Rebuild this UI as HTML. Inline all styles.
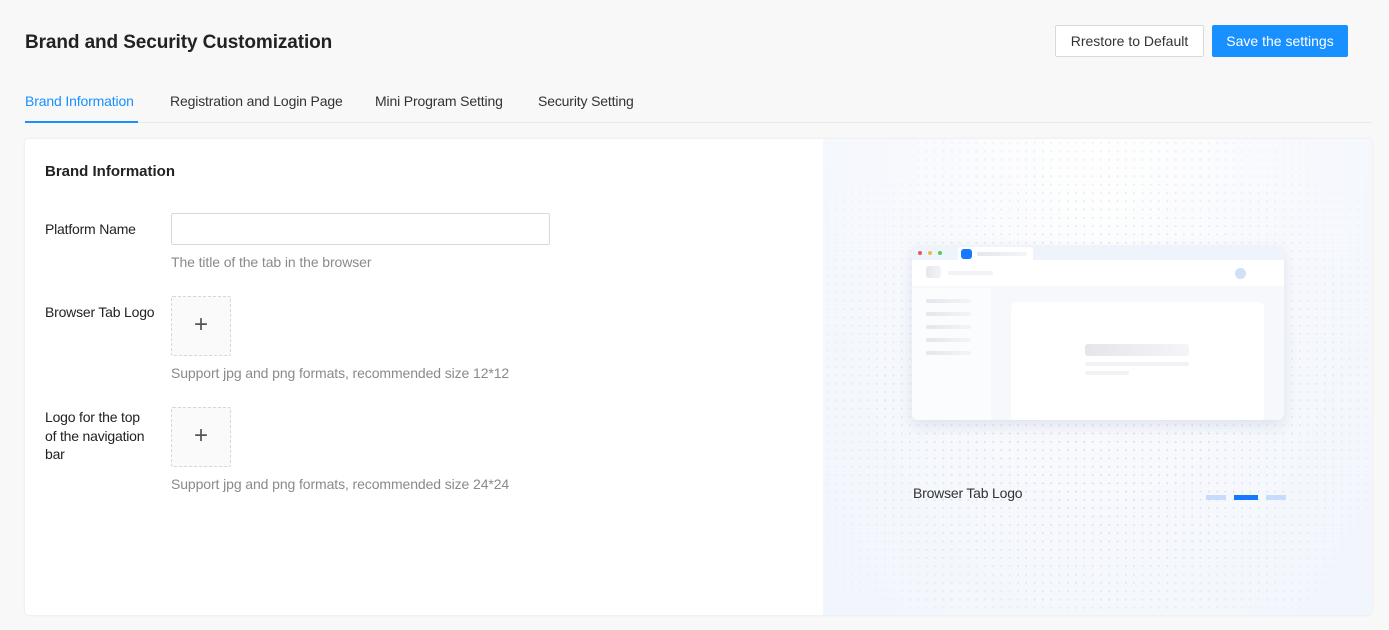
<!DOCTYPE html>
<html><head><meta charset="utf-8"><style>
*{box-sizing:border-box;margin:0;padding:0}
body{width:1389px;height:630px;background:#f8f8f8;font-family:"Liberation Sans",sans-serif;color:#222;position:relative;overflow:hidden}
.abs{position:absolute}
h1{position:absolute;left:25px;top:32px;font-size:19px;font-weight:bold;color:#222;letter-spacing:-0.1px}
.btn{position:absolute;top:25px;height:32px;font-size:14px;line-height:30px;text-align:center;border-radius:2px}
.tab{position:absolute;top:93px;font-size:14px;color:#333;letter-spacing:-0.15px}
.card{position:absolute;left:25px;top:139px;width:1347px;height:476px;background:#fff;border-radius:4px;box-shadow:0 0 3px rgba(0,0,0,.08);overflow:hidden}
.lbl{position:absolute;font-size:14px;color:#222;line-height:18.5px;letter-spacing:-0.2px;white-space:nowrap}
.hint{position:absolute;font-size:14px;color:#8a8a8a;letter-spacing:-0.1px}
.up{position:absolute;width:60px;height:60px;border:1px dashed #d6d6d6;background:#fafafa;border-radius:2px;font-size:24px;color:#555;text-align:center;line-height:56px;font-weight:300}
.right{position:absolute;left:798px;top:0;width:549px;height:476px;background:radial-gradient(ellipse at 50% 0%,#ffffff 0%,#f7f9fd 50%,#f1f5fc 100%);}
.dots{position:absolute;inset:0;background-image:radial-gradient(circle,#d6dbe6 0.8px,transparent 1.1px);background-size:8.3px 8.3px;-webkit-mask-image:radial-gradient(ellipse at 50% 55%,#000 30%,rgba(0,0,0,.35) 75%,transparent 100%)}
.bar{position:absolute;background:linear-gradient(90deg,#e4e6ec,#f4f5f8);border-radius:3px}
</style></head><body>
<h1>Brand and Security Customization</h1>
<div class="btn" style="left:1055px;width:149px;border:1px solid #d9d9d9;background:#fff;color:#333">Rrestore to Default</div>
<div class="btn" style="left:1212px;width:136px;background:#1890ff;color:#fff;line-height:32px">Save the settings</div>
<div class="tab" style="left:25px;color:#1890ff">Brand Information</div>
<div class="tab" style="left:170px">Registration and Login Page</div>
<div class="tab" style="left:375px">Mini Program Setting</div>
<div class="tab" style="left:538px">Security Setting</div>
<div class="abs" style="left:25px;top:122px;width:1347px;height:1px;background:#e9e9e9"></div>
<div class="abs" style="left:25px;top:121px;width:113px;height:2px;background:#1890ff"></div>
<div class="card">
 <div class="abs" style="left:20px;top:24px;font-size:15px;font-weight:bold;color:#222">Brand Information</div>
 <div class="lbl" style="left:20px;top:81px">Platform Name</div>
 <div class="abs" style="left:146px;top:74px;width:379px;height:32px;border:1px solid #d9d9d9;border-radius:2px;background:#fff"></div>
 <div class="hint" style="left:146px;top:115px">The title of the tab in the browser</div>
 <div class="lbl" style="left:20px;top:164px">Browser Tab Logo</div>
 <div class="up" style="left:146px;top:157px">+</div>
 <div class="hint" style="left:146px;top:226px">Support jpg and png formats, recommended size 12*12</div>
 <div class="lbl" style="left:20px;top:269px">Logo for the top<br>of the navigation<br>bar</div>
 <div class="up" style="left:146px;top:268px">+</div>
 <div class="hint" style="left:146px;top:337px">Support jpg and png formats, recommended size 24*24</div>
 <div class="right"><div class="dots"></div>
  <div class="abs" style="left:89px;top:106px;width:372px;height:175px;background:#fff;border-radius:6px;box-shadow:0 6px 14px rgba(180,190,210,.35);overflow:hidden">
   <div class="abs" style="left:0;top:0;width:372px;height:15px;background:#eef3fc"></div>
   <div class="abs" style="left:6px;top:6px;width:4px;height:4px;border-radius:50%;background:#e55"></div>
   <div class="abs" style="left:16px;top:6px;width:4px;height:4px;border-radius:50%;background:#eb4"></div>
   <div class="abs" style="left:26px;top:6px;width:4px;height:4px;border-radius:50%;background:#5c5"></div>
   <div class="abs" style="left:46px;top:2px;width:75px;height:14px;background:#fff;border-radius:3px 3px 0 0"></div>
   <div class="abs" style="left:49px;top:4px;width:11px;height:10px;background:#1677ff;border-radius:3px"></div>
   <div class="bar" style="left:65px;top:7px;width:50px;height:4px"></div>
   <div class="bar" style="left:14px;top:21px;width:15px;height:12px"></div>
   <div class="bar" style="left:36px;top:26px;width:45px;height:4px;background:#f1f2f5"></div>
   <div class="abs" style="left:323px;top:23px;width:11px;height:11px;border-radius:50%;background:#cfe0f7"></div>
   <div class="abs" style="left:0;top:41px;width:372px;height:134px;background:#f6f8fc"></div>
   <div class="abs" style="left:0;top:43px;width:79px;height:132px;background:#fbfcfe"></div>
   <div class="bar" style="left:14px;top:54px;width:45px;height:4px"></div>
   <div class="bar" style="left:14px;top:67px;width:45px;height:4px"></div>
   <div class="bar" style="left:14px;top:80px;width:45px;height:4px"></div>
   <div class="bar" style="left:14px;top:93px;width:45px;height:4px"></div>
   <div class="bar" style="left:14px;top:106px;width:45px;height:4px"></div>
   <div class="abs" style="left:99px;top:57px;width:253px;height:120px;background:#fff;border-radius:6px"></div>
   <div class="bar" style="left:173px;top:99px;width:104px;height:12px"></div>
   <div class="bar" style="left:173px;top:117px;width:104px;height:4px;background:#f1f2f5"></div>
   <div class="bar" style="left:173px;top:126px;width:44px;height:4px;background:#f1f2f5"></div>
  </div>
  <div class="abs" style="left:90px;top:346px;font-size:14px;color:#333;letter-spacing:-0.2px">Browser Tab Logo</div>
  <div class="abs" style="left:383px;top:356px;width:20px;height:5px;background:#c6dcfb"></div>
  <div class="abs" style="left:411px;top:356px;width:24px;height:5px;background:#1677ff"></div>
  <div class="abs" style="left:443px;top:356px;width:20px;height:5px;background:#c6dcfb"></div>
 </div>
</div>
</body></html>
